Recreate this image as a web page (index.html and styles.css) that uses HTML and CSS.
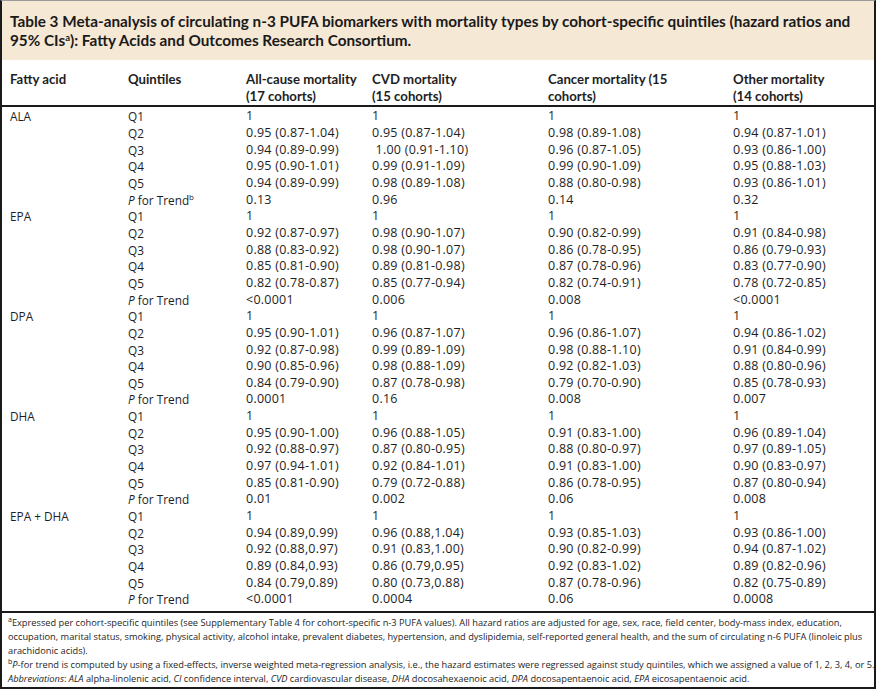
FILE: index.html
```html
<!DOCTYPE html>
<html>
<head>
<meta charset="utf-8">
<link rel="stylesheet" href="styles.css">
</head>
<body>
<div class="frame">
  <div class="title">Table 3 Meta-analysis of circulating n-3 PUFA biomarkers with mortality types by cohort-specific quintiles (hazard ratios and 95% CIs<sup>a</sup>): Fatty Acids and Outcomes Research Consortium.</div>
  <table class="data">
    <colgroup>
      <col class="c1"><col class="c2"><col class="c3"><col class="c4"><col class="c5"><col class="c6">
    </colgroup>
    <thead>
      <tr><th>Fatty acid</th><th>Quintiles</th><th>All-cause mortality<br>(17 cohorts)</th><th>CVD mortality<br>(15 cohorts)</th><th>Cancer mortality (15<br>cohorts)</th><th>Other mortality<br>(14 cohorts)</th></tr>
    </thead>
    <tbody>
      <tr><td>ALA</td><td>Q1</td><td>1</td><td>1</td><td>1</td><td>1</td></tr>
      <tr><td></td><td>Q2</td><td>0.95 (0.87-1.04)</td><td>0.95 (0.87-1.04)</td><td>0.98 (0.89-1.08)</td><td>0.94 (0.87-1.01)</td></tr>
      <tr><td></td><td>Q3</td><td>0.94 (0.89-0.99)</td><td>&nbsp;1.00 (0.91-1.10)</td><td>0.96 (0.87-1.05)</td><td>0.93 (0.86-1.00)</td></tr>
      <tr><td></td><td>Q4</td><td>0.95 (0.90-1.01)</td><td>0.99 (0.91-1.09)</td><td>0.99 (0.90-1.09)</td><td>0.95 (0.88-1.03)</td></tr>
      <tr><td></td><td>Q5</td><td>0.94 (0.89-0.99)</td><td>0.98 (0.89-1.08)</td><td>0.88 (0.80-0.98)</td><td>0.93 (0.86-1.01)</td></tr>
      <tr><td></td><td><i>P</i> for Trend<sup>b</sup></td><td>0.13</td><td>0.96</td><td>0.14</td><td>0.32</td></tr>
      <tr><td>EPA</td><td>Q1</td><td>1</td><td>1</td><td>1</td><td>1</td></tr>
      <tr><td></td><td>Q2</td><td>0.92 (0.87-0.97)</td><td>0.98 (0.90-1.07)</td><td>0.90 (0.82-0.99)</td><td>0.91 (0.84-0.98)</td></tr>
      <tr><td></td><td>Q3</td><td>0.88 (0.83-0.92)</td><td>0.98 (0.90-1.07)</td><td>0.86 (0.78-0.95)</td><td>0.86 (0.79-0.93)</td></tr>
      <tr><td></td><td>Q4</td><td>0.85 (0.81-0.90)</td><td>0.89 (0.81-0.98)</td><td>0.87 (0.78-0.96)</td><td>0.83 (0.77-0.90)</td></tr>
      <tr><td></td><td>Q5</td><td>0.82 (0.78-0.87)</td><td>0.85 (0.77-0.94)</td><td>0.82 (0.74-0.91)</td><td>0.78 (0.72-0.85)</td></tr>
      <tr><td></td><td><i>P</i> for Trend</td><td>&lt;0.0001</td><td>0.006</td><td>0.008</td><td>&lt;0.0001</td></tr>
      <tr><td>DPA</td><td>Q1</td><td>1</td><td>1</td><td>1</td><td>1</td></tr>
      <tr><td></td><td>Q2</td><td>0.95 (0.90-1.01)</td><td>0.96 (0.87-1.07)</td><td>0.96 (0.86-1.07)</td><td>0.94 (0.86-1.02)</td></tr>
      <tr><td></td><td>Q3</td><td>0.92 (0.87-0.98)</td><td>0.99 (0.89-1.09)</td><td>0.98 (0.88-1.10)</td><td>0.91 (0.84-0.99)</td></tr>
      <tr><td></td><td>Q4</td><td>0.90 (0.85-0.96)</td><td>0.98 (0.88-1.09)</td><td>0.92 (0.82-1.03)</td><td>0.88 (0.80-0.96)</td></tr>
      <tr><td></td><td>Q5</td><td>0.84 (0.79-0.90)</td><td>0.87 (0.78-0.98)</td><td>0.79 (0.70-0.90)</td><td>0.85 (0.78-0.93)</td></tr>
      <tr><td></td><td><i>P</i> for Trend</td><td>0.0001</td><td>0.16</td><td>0.008</td><td>0.007</td></tr>
      <tr><td>DHA</td><td>Q1</td><td>1</td><td>1</td><td>1</td><td>1</td></tr>
      <tr><td></td><td>Q2</td><td>0.95 (0.90-1.00)</td><td>0.96 (0.88-1.05)</td><td>0.91 (0.83-1.00)</td><td>0.96 (0.89-1.04)</td></tr>
      <tr><td></td><td>Q3</td><td>0.92 (0.88-0.97)</td><td>0.87 (0.80-0.95)</td><td>0.88 (0.80-0.97)</td><td>0.97 (0.89-1.05)</td></tr>
      <tr><td></td><td>Q4</td><td>0.97 (0.94-1.01)</td><td>0.92 (0.84-1.01)</td><td>0.91 (0.83-1.00)</td><td>0.90 (0.83-0.97)</td></tr>
      <tr><td></td><td>Q5</td><td>0.85 (0.81-0.90)</td><td>0.79 (0.72-0.88)</td><td>0.86 (0.78-0.95)</td><td>0.87 (0.80-0.94)</td></tr>
      <tr><td></td><td><i>P</i> for Trend</td><td>0.01</td><td>0.002</td><td>0.06</td><td>0.008</td></tr>
      <tr><td>EPA + DHA</td><td>Q1</td><td>1</td><td>1</td><td>1</td><td>1</td></tr>
      <tr><td></td><td>Q2</td><td>0.94 (0.89,0.99)</td><td>0.96 (0.88,1.04)</td><td>0.93 (0.85-1.03)</td><td>0.93 (0.86-1.00)</td></tr>
      <tr><td></td><td>Q3</td><td>0.92 (0.88,0.97)</td><td>0.91 (0.83,1.00)</td><td>0.90 (0.82-0.99)</td><td>0.94 (0.87-1.02)</td></tr>
      <tr><td></td><td>Q4</td><td>0.89 (0.84,0.93)</td><td>0.86 (0.79,0.95)</td><td>0.92 (0.83-1.02)</td><td>0.89 (0.82-0.96)</td></tr>
      <tr><td></td><td>Q5</td><td>0.84 (0.79,0.89)</td><td>0.80 (0.73,0.88)</td><td>0.87 (0.78-0.96)</td><td>0.82 (0.75-0.89)</td></tr>
      <tr><td></td><td><i>P</i> for Trend</td><td>&lt;0.0001</td><td>0.0004</td><td>0.06</td><td>0.0008</td></tr>
    </tbody>
  </table>
  <div class="notes">
    <p><sup>a</sup>Expressed per cohort-specific quintiles (see Supplementary Table 4 for cohort-specific n-3 PUFA values). All hazard ratios are adjusted for age, sex, race, field center, body-mass index, education,<br>occupation, marital status, smoking, physical activity, alcohol intake, prevalent diabetes, hypertension, and dyslipidemia, self-reported general health, and the sum of circulating n-6 PUFA (linoleic plus<br>arachidonic acids).</p>
    <p><sup>b</sup><i>P</i>-for trend is computed by using a fixed-effects, inverse weighted meta-regression analysis, i.e., the hazard estimates were regressed against study quintiles, which we assigned a value of 1, 2, 3, 4, or 5.</p>
    <p><i>Abbreviations</i>: <i>ALA</i> alpha-linolenic acid, <i>CI</i> confidence interval, <i>CVD</i> cardiovascular disease, <i>DHA</i> docosahexaenoic acid, <i>DPA</i> docosapentaenoic acid, <i>EPA</i> eicosapentaenoic acid.</p>
  </div>
</div>
</body>
</html>
```
FILE: styles.css
```css
html, body {
  margin: 0;
  padding: 0;
  background: #ffffff;
}
.frame {
  box-sizing: border-box;
  width: 876px;
  height: 689px;
  border-left: 2px solid #1a1a1a;
  border-right: 2px solid #1a1a1a;
  border-top: 1px solid #9a9a9a;
  border-bottom: 2px solid #1a1a1a;
  font-family: "Open Sans", "Noto Sans", sans-serif;
  color: #1e1e1e;
  overflow: hidden;
}
.title {
  background: #f5e8d5;
  font-family: Lato, "Open Sans", sans-serif;
  font-weight: bold;
  font-size: 15.3px;
  line-height: 19px;
  padding: 11px 0 10px 8px;
  color: #1a1a1a;
}
.title sup {
  font-size: 9.5px;
  line-height: 0;
  vertical-align: 5px;
}
.data {
  width: 100%;
  border-collapse: collapse;
  font-size: 12.5px;
  letter-spacing: 0.25px;
  margin-top: 11px;
}
.c1 { width: 118px; }
.c2 { width: 118px; }
.c3 { width: 126px; }
.c4 { width: 176px; }
.c5 { width: 185px; }
.data th {
  font-family: Lato, "Open Sans", sans-serif;
  font-weight: bold;
  font-size: 13.2px;
  letter-spacing: 0;
  line-height: 17px;
  text-align: left;
  vertical-align: top;
  padding: 0 0 0 8px;
  border-bottom: 2px solid #1a1a1a;
}
.data td {
  padding: 0 0 0 8px;
  height: 16.67px;
  line-height: 16px;
  vertical-align: middle;
  white-space: nowrap;
}
.data td:nth-child(1),
.data td:nth-child(2) {
  font-size: 11.8px;
  letter-spacing: 0;
}
.data tbody tr:first-child td { padding-top: 1px; }
.data tbody tr:last-child td {
  border-bottom: 2px solid #1a1a1a;
  padding-bottom: 3px;
}
.data sup {
  font-size: 8px;
  line-height: 0;
}
.notes {
  padding: 3px 4px 0 6px;
  font-size: 9.25px;
  line-height: 14px;
  white-space: nowrap;
}
.notes p {
  margin: 0;
}
.notes sup {
  font-size: 7px;
  line-height: 0;
}
```
